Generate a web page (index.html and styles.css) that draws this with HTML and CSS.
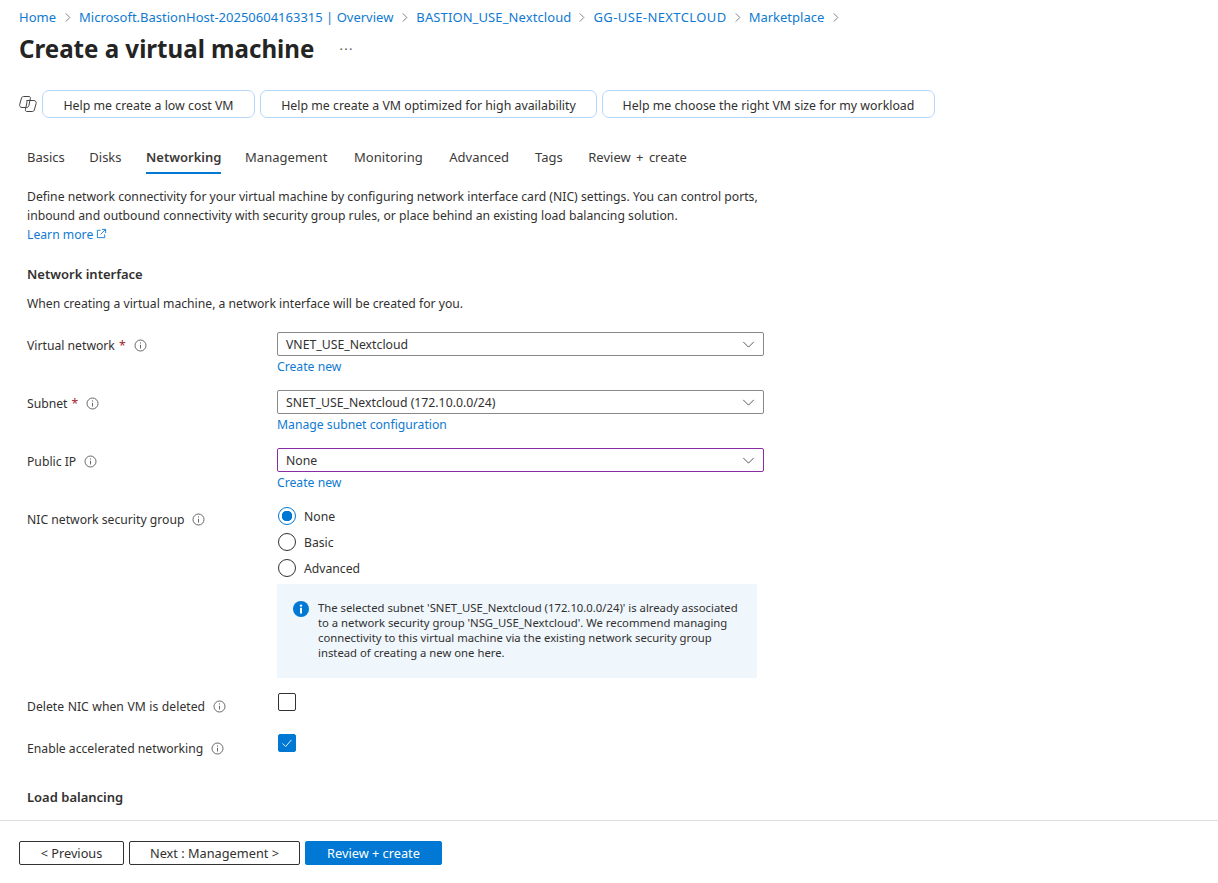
FILE: index.html
```html
<!DOCTYPE html>
<html lang="en">
<head>
  <meta charset="UTF-8">
  <title>Create a virtual machine</title>
  <link rel="stylesheet" href="styles.css">
</head>
<body>
  <div class="page">
    <div class="content">
      <nav class="crumbs">
        <a>Home</a>
        <svg class="crumb-sep" viewBox="0 0 8 12"><path d="M1.500 1.500 6 6l-4.500 4.500"/></svg>
        <a>Microsoft.BastionHost-20250604163315 | Overview</a>
        <svg class="crumb-sep" viewBox="0 0 8 12"><path d="M1.500 1.500 6 6l-4.500 4.500"/></svg>
        <a class="caps">BASTION_USE_Nextcloud</a>
        <svg class="crumb-sep tight" viewBox="0 0 8 12"><path d="M1.500 1.500 6 6l-4.500 4.500"/></svg>
        <a class="caps">GG-USE-NEXTCLOUD</a>
        <svg class="crumb-sep tight" viewBox="0 0 8 12"><path d="M1.500 1.500 6 6l-4.500 4.500"/></svg>
        <a>Marketplace</a>
        <svg class="crumb-sep" viewBox="0 0 8 12"><path d="M1.500 1.500 6 6l-4.500 4.500"/></svg>
      </nav>

      <div class="title-row">
        <h1>Create a virtual machine</h1>
        <span class="more">···</span>
      </div>

      <div class="chips">
        <svg class="copilot" viewBox="0 0 18 18">
          <path d="M4.500 1.500H10c1 0 1.600.8 1.400 1.800l-1.500 7.200c-.3 1.200-1.200 2-2.400 2H3c-1.700 0-2.700-1.300-2.300-3l1.800-6.500C2.800 2.300 3.400 1.500 4.500 1.500z"/>
          <path d="M8 5.500h6.800c1.700 0 2.700 1.300 2.300 3l-1.800 6.500c-.3 1-.9 1.500-2 1.500H7.800c-1 0-1.600-.8-1.400-1.800l1.500-7.200c.3-1.200-.9-2 .1-2z"/>
        </svg>
        <button class="chip chip-low">Help me create a low cost VM</button>
        <button class="chip chip-ha">Help me create a VM optimized for high availability</button>
        <button class="chip chip-size">Help me choose the right VM size for my workload</button>
      </div>

      <div class="tabs">
        <span class="tab">Basics</span>
        <span class="tab">Disks</span>
        <span class="tab active">Networking</span>
        <span class="tab wide">Management</span>
        <span class="tab wide">Monitoring</span>
        <span class="tab advanced">Advanced</span>
        <span class="tab">Tags</span>
        <span class="tab review">Review + create</span>
      </div>

      <p class="intro">Define network connectivity for your virtual machine by configuring network interface card (NIC) settings. You can control ports, inbound and outbound connectivity with security group rules, or place behind an existing load balancing solution.<br>
        <a>Learn more <svg class="ext" viewBox="0 0 12 12"><path d="M5 2.500H1.500v8h8V7M6.500 1.500h4v4M10.500 1.500 5 7"/></svg></a>
      </p>

      <h2 class="section">Network interface</h2>
      <p class="section-note">When creating a virtual machine, a network interface will be created for you.</p>

      <div class="field">
        <div class="field-label">Virtual network <span class="req">*</span>
          <svg class="info" viewBox="0 0 13 13"><circle cx="6.500" cy="6.500" r="5.500"/><path d="M6.500 5.800v3.700M6.500 3.400v1.100"/></svg>
        </div>
        <div class="field-ctl">
          <div class="select"><span>VNET_USE_Nextcloud</span><svg class="caret" viewBox="0 0 14 8"><path d="M1 1l6 6 6-6"/></svg></div>
          <a class="sublink">Create new</a>
        </div>
      </div>

      <div class="field">
        <div class="field-label">Subnet <span class="req">*</span>
          <svg class="info" viewBox="0 0 13 13"><circle cx="6.500" cy="6.500" r="5.500"/><path d="M6.500 5.800v3.700M6.500 3.400v1.100"/></svg>
        </div>
        <div class="field-ctl">
          <div class="select"><span>SNET_USE_Nextcloud (172.10.0.0/24)</span><svg class="caret" viewBox="0 0 14 8"><path d="M1 1l6 6 6-6"/></svg></div>
          <a class="sublink">Manage subnet configuration</a>
        </div>
      </div>

      <div class="field">
        <div class="field-label">Public IP
          <svg class="info" viewBox="0 0 13 13"><circle cx="6.500" cy="6.500" r="5.500"/><path d="M6.500 5.800v3.700M6.500 3.400v1.100"/></svg>
        </div>
        <div class="field-ctl">
          <div class="select focused"><span>None</span><svg class="caret" viewBox="0 0 14 8"><path d="M1 1l6 6 6-6"/></svg></div>
          <a class="sublink">Create new</a>
        </div>
      </div>

      <div class="field field-nsg">
        <div class="field-label">NIC network security group
          <svg class="info" viewBox="0 0 13 13"><circle cx="6.500" cy="6.500" r="5.500"/><path d="M6.500 5.800v3.700M6.500 3.400v1.100"/></svg>
        </div>
        <div class="field-ctl">
          <div class="radio-row"><span class="radio checked"></span>None</div>
          <div class="radio-row"><span class="radio"></span>Basic</div>
          <div class="radio-row"><span class="radio"></span>Advanced</div>
          <div class="notice">
            <svg class="notice-icon" viewBox="0 0 16 16"><circle cx="8" cy="8" r="8"/><rect x="7" y="6.800" width="2" height="5.700" fill="#fff"/><circle cx="8" cy="4.600" r="1.200" fill="#fff"/></svg>
            <p>The selected subnet 'SNET_USE_Nextcloud (172.10.0.0/24)' is already associated to a network security group 'NSG_USE_Nextcloud'. We recommend managing connectivity to this virtual machine via the existing network security group instead of creating a new one here.</p>
          </div>
        </div>
      </div>

      <div class="field field-check">
        <div class="field-label label-delete">Delete NIC when VM is deleted
          <svg class="info" viewBox="0 0 13 13"><circle cx="6.500" cy="6.500" r="5.500"/><path d="M6.500 5.800v3.700M6.500 3.400v1.100"/></svg>
        </div>
        <div class="field-ctl"><span class="check"></span></div>
      </div>

      <div class="field field-check">
        <div class="field-label">Enable accelerated networking
          <svg class="info" viewBox="0 0 13 13"><circle cx="6.500" cy="6.500" r="5.500"/><path d="M6.500 5.800v3.700M6.500 3.400v1.100"/></svg>
        </div>
        <div class="field-ctl">
          <span class="check checked"><svg viewBox="0 0 18 18"><path d="M4 9.500l3.500 3.500L14 5.500"/></svg></span>
        </div>
      </div>

      <h2 class="section section-lb">Load balancing</h2>
    </div>

    <div class="footer">
      <button class="btn btn-prev">&lt; Previous</button>
      <button class="btn btn-next">Next : Management &gt;</button>
      <button class="btn btn-primary">Review + create</button>
    </div>
  </div>
</body>
</html>
```

FILE: styles.css
```css
* {
  box-sizing: border-box;
}
html, body {
  margin: 0;
  height: 100%;
}
body {
  font-family: "Noto Sans", "Open Sans", sans-serif;
  font-size: 12.200px;
  color: #323130;
  background: #fff;
  overflow: hidden;
}
a {
  color: #0f7ad1;
}
p {
  margin: 0;
}
.page {
  height: 883px;
  display: flex;
  flex-direction: column;
}
.content {
  flex: 1;
  overflow: hidden;
  padding: 0 19px;
}

/* breadcrumb */
.crumbs {
  display: flex;
  align-items: center;
  height: 34px;
  font-size: 13px;
  gap: 7.500px;
}
.crumbs .caps {
  letter-spacing: 0.1px;
}
.crumbs .caps + .tight + .caps {
  letter-spacing: 0.4px;
}
.crumb-sep {
  width: 8px;
  height: 11px;
  fill: none;
  stroke: #777;
  stroke-width: 1;
}
.crumb-sep.tight {
  margin: 0 -0.500px;
}

.title-row {
  display: flex;
  align-items: center;
  height: 29px;
}
h1 {
  margin: 0;
  font-size: 24.100px;
  font-weight: 700;
  color: #242424;
}
.more {
  margin-left: 25px;
  font-size: 13px;
  letter-spacing: 1.300px;
  color: #555;
}

/* copilot prompts */
.chips {
  display: flex;
  align-items: center;
  gap: 5px;
  margin-top: 27px;
}
.copilot {
  width: 18px;
  height: 18px;
  fill: none;
  stroke: #444;
  stroke-width: 1;
}
.chip {
  height: 28px;
  background: #fff;
  border: 1px solid #b4d6fa;
  border-radius: 7px;
  font: inherit;
  font-size: 12.350px;
  color: #323130;
  padding: 2px 0 0;
}
.chip-low { width: 213px; }
.chip-ha { width: 337px; }
.chip-size { width: 333px; }

/* tabs */
.tabs {
  display: flex;
  margin: 26px 0 0 8px;
  height: 30px;
  font-size: 13px;
}
.tab {
  margin-right: 24.500px;
  padding-top: 4px;
  color: #3b3a39;
}
.tab.wide {
  margin-right: 26.500px;
  letter-spacing: 0.05px;
}
.tab.advanced {
  margin-right: 26px;
}
.tab.review {
  margin-left: 1px;
  word-spacing: 2px;
}
.tab.active {
  margin-right: 23.500px;
  font-weight: 600;
  border-bottom: 2px solid #0078d4;
}

.intro {
  margin: 13px 0 0 8px;
  width: 745px;
  line-height: 19px;
}
.ext {
  width: 11px;
  height: 11px;
  fill: none;
  stroke: #0f7ad1;
  stroke-width: 1;
}
.section {
  margin: 20px 0 0 8px;
  font-size: 13px;
  font-weight: 600;
  line-height: 20px;
}
.section-note {
  margin: 10px 0 0 8px;
  line-height: 20px;
}

/* form rows */
.field {
  display: grid;
  grid-template-columns: 250px 487px;
  margin: 0 0 0 8px;
  height: 58px;
}
.section-note + .field {
  margin-top: 18px;
}
.field-label {
  display: flex;
  align-items: center;
  height: 26px;
  gap: 4px;
}
.label-delete {
  word-spacing: 0.4px;
}
.req {
  color: #a4262c;
}
.info {
  width: 13px;
  height: 13px;
  margin-left: 4px;
  fill: none;
  stroke: #666;
  stroke-width: 1;
}
.select {
  display: flex;
  align-items: center;
  justify-content: space-between;
  height: 24px;
  padding: 1px 8px 0;
  border: 1px solid #8a8886;
  border-radius: 2px;
  font-size: 12.250px;
}
.select.focused {
  border-color: #8a2da5;
}
.caret {
  width: 13px;
  height: 7px;
  fill: none;
  stroke: #444;
  stroke-width: 1;
}
.sublink {
  display: block;
  margin-top: 1px;
  line-height: 20px;
}

/* radios */
.field-nsg {
  height: auto;
  margin-top: -3px;
}
.field-nsg .field-label {
  margin-top: 3px;
}
.radio-row {
  display: flex;
  align-items: center;
  height: 26px;
  gap: 8px;
  padding-left: 1px;
}
.radio {
  width: 18px;
  height: 18px;
  border-radius: 50%;
  border: 1px solid #323130;
}
.radio.checked {
  border-color: #0078d4;
  background: radial-gradient(circle, #0078d4 0 5px, #fff 5.500px);
}
.notice {
  display: flex;
  gap: 9px;
  width: 480px;
  height: 94px;
  margin-top: 3px;
  padding: 16px;
  background: #eff6fc;
}
.notice-icon {
  flex: none;
  width: 16px;
  height: 16px;
  margin-top: 1px;
  fill: #0078d4;
}
.notice p {
  font-size: 11.300px;
  line-height: 15px;
}

/* checkboxes */
.field-check {
  height: 42px;
}
.check {
  display: block;
  width: 18px;
  height: 18px;
  margin-left: 1px;
  border: 1px solid #323130;
  border-radius: 2px;
}
.check.checked {
  margin-top: -1px;
  background: #0078d4;
  border-color: #0078d4;
}
.check svg {
  display: block;
  width: 16px;
  height: 16px;
  fill: none;
  stroke: #fff;
  stroke-width: 1;
}
.field-nsg + .field-check {
  margin-top: 15px;
}
.section-lb {
  margin-top: 10px;
}

/* footer */
.footer {
  display: flex;
  gap: 5px;
  height: 63px;
  padding: 20px 19px 0;
  border-top: 1px solid #e1dfdd;
}
.btn {
  height: 24px;
  background: #fff;
  border: 1px solid #323130;
  border-radius: 2px;
  font: inherit;
  font-size: 12.750px;
  color: #323130;
  padding: 0;
}
.btn-prev { width: 105px; }
.btn-next { width: 171px; }
.btn-primary {
  width: 137px;
  background: #0078d4;
  border-color: #0078d4;
  color: #fff;
}
```
